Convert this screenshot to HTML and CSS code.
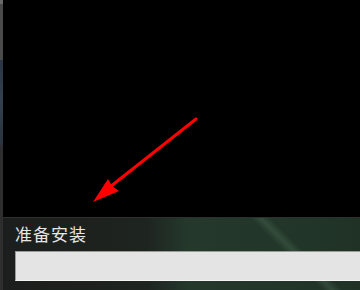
FILE: index.html
```html
<!DOCTYPE html>
<html lang="zh-CN">
<head>
  <meta charset="UTF-8" />
  <meta name="viewport" content="width=device-width, initial-scale=1.0" />
  <title>准备安装</title>
  <link rel="stylesheet" href="styles.css">
</head>
<body>
  <div class="edge"></div>

  <div class="main">
    <div class="screen">
      <svg class="arrow" width="360" height="217" viewBox="0 0 360 217">
        <line x1="196" y1="119" x2="101" y2="194" stroke="#f00" stroke-width="3" stroke-linecap="round" />
        <polygon points="93,202 108,179 112,186 119,191" fill="#f00" />
      </svg>
    </div>

    <div class="panel">
      <div class="status">准备安装</div>
      <div class="progress"></div>
    </div>
  </div>
</body>
</html>
```

FILE: styles.css
```css
body {
  margin: 0;
  padding: 0;
  width: 360px;
  height: 290px;
  overflow: hidden;
  display: flex;
  background-color: #000;
  font-family: "Noto Sans CJK SC", "DejaVu Sans", sans-serif;
}

.edge {
  width: 3px;
  background: linear-gradient(180deg, #6a6a6a 0, #6a6a6a 4px, #4a4a4a 4px, #4a4a4a 60px, #2b3543 60px, #34404e 100px, #2a333f 145px, #2e2e2e 145px);
}

.main {
  flex: 1;
  display: flex;
  flex-direction: column;
}

.screen {
  height: 217px;
  background-color: #000;
  position: relative;
}

.arrow {
  position: absolute;
  left: -3px;
  top: 0;
}

.panel {
  flex: 1;
  display: flex;
  flex-direction: column;
  padding: 5px 0 0 12px;
  gap: 6px;
  border-top: 1px solid #2c312d;
  background:
    linear-gradient(45deg, transparent 0, transparent 226px, rgba(120, 160, 130, 0.2) 233px, transparent 240px),
    linear-gradient(90deg, #1b1e1c 0%, #1e2420 40%, #24392c 52%, #22372a 75%, #203226 100%);
}

.status {
  color: #e6e6e6;
  font-size: 17px;
  line-height: 22px;
  letter-spacing: 1px;
}

.progress {
  height: 28px;
  margin-right: -2px;
  background-color: #e4e4e4;
  border: 1px solid #9a9a9a;
  border-bottom-color: #f4f4f4;
}
```
